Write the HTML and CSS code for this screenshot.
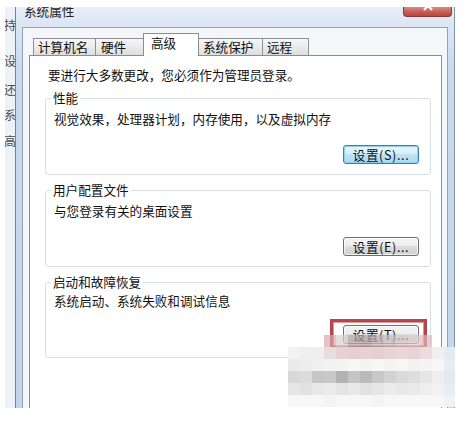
FILE: index.html
```html
<!DOCTYPE html>
<html lang="zh-CN">
<head>
<meta charset="utf-8">
<title>系统属性</title>
<link rel="stylesheet" href="styles.css">
</head>
<body>
<div class="scene">
  <div class="bgwin">
    <span class="bgchar c1">持</span>
    <span class="bgchar c2">设</span>
    <span class="bgchar c3">还</span>
    <span class="bgchar c4">系</span>
    <span class="bgchar c5">高</span>
  </div>
  <div class="dialog">
    <div class="titlebar">
      <span class="title">系统属性</span>
      <span class="close"><svg width="47" height="9" viewBox="0 0 47 9"><path d="M20 -6 L28 3 M28 -6 L20 3" stroke="#ffffff" stroke-width="2.2" fill="none"/></svg></span>
    </div>
    <div class="content">
      <div class="tabs">
        <div class="tab t1">计算机名</div>
        <div class="tab t2">硬件</div>
        <div class="tab sel t3">高级</div>
        <div class="tab t4">系统保护</div>
        <div class="tab t5">远程</div>
      </div>
      <div class="panel">
        <p class="intro">要进行大多数更改，您必须作为管理员登录。</p>
        <div class="group g1">
          <span class="legend">性能</span>
          <p class="desc">视觉效果，处理器计划，内存使用，以及虚拟内存</p>
          <div class="btnrow"><button class="btn default">设置(S)...</button></div>
        </div>
        <div class="group g2">
          <span class="legend">用户配置文件</span>
          <p class="desc">与您登录有关的桌面设置</p>
          <div class="btnrow"><button class="btn">设置(E)...</button></div>
        </div>
        <div class="group g3">
          <span class="legend">启动和故障恢复</span>
          <p class="desc">系统启动、系统失败和调试信息</p>
          <div class="btnrow"><button class="btn">设置(T)...</button><span class="hl"></span></div>
        </div>
      </div>
    </div>
  </div>
  <svg class="mosaic" width="168" height="72" viewBox="0 0 168 72" shape-rendering="crispEdges">
    <g fill-opacity="0.7">
      <rect x="36" y="0" width="12" height="12" fill="#d7a9b0"/>
      <rect x="48" y="0" width="12" height="12" fill="#dcd0d0"/>
      <rect x="60" y="0" width="12" height="12" fill="#b8a8ac"/>
      <rect x="72" y="0" width="12" height="12" fill="#b4a4a8"/>
      <rect x="84" y="0" width="12" height="12" fill="#c4b4b8"/>
      <rect x="96" y="0" width="12" height="12" fill="#ccbec1"/>
      <rect x="108" y="0" width="12" height="12" fill="#d6c8ca"/>
      <rect x="120" y="0" width="12" height="12" fill="#dccdcf"/>
      <rect x="132" y="0" width="12" height="12" fill="#dcb8bc"/>
    </g>
    <rect x="0" y="12" width="12" height="12" fill="#f2f2f2"/>
    <rect x="12" y="12" width="12" height="12" fill="#efefef"/>
    <rect x="24" y="12" width="12" height="12" fill="#eeeeee"/>
    <rect x="36" y="12" width="12" height="12" fill="#e8dcdd"/>
    <rect x="48" y="12" width="12" height="12" fill="#e6d2d5"/>
    <rect x="60" y="12" width="12" height="12" fill="#e4d0d3"/>
    <rect x="72" y="12" width="12" height="12" fill="#e6d2d5"/>
    <rect x="84" y="12" width="12" height="12" fill="#e4d0d3"/>
    <rect x="96" y="12" width="12" height="12" fill="#e6d4d6"/>
    <rect x="108" y="12" width="12" height="12" fill="#e8d6d8"/>
    <rect x="120" y="12" width="12" height="12" fill="#e6d4d6"/>
    <rect x="132" y="12" width="12" height="12" fill="#ecdcde"/>
    <rect x="144" y="12" width="12" height="12" fill="#f2eeee"/>
    <rect x="156" y="12" width="12" height="12" fill="#e2eaf2"/>
    <rect x="0" y="24" width="12" height="12" fill="#eaeaea"/>
    <rect x="12" y="24" width="12" height="12" fill="#ededed"/>
    <rect x="24" y="24" width="12" height="12" fill="#f0f0f0"/>
    <rect x="36" y="24" width="12" height="12" fill="#f2f2f2"/>
    <rect x="48" y="24" width="12" height="12" fill="#f4f4f4"/>
    <rect x="60" y="24" width="12" height="12" fill="#f6f6f6"/>
    <rect x="72" y="24" width="12" height="12" fill="#f4f4f4"/>
    <rect x="84" y="24" width="12" height="12" fill="#f6f6f6"/>
    <rect x="96" y="24" width="12" height="12" fill="#f4f4f4"/>
    <rect x="108" y="24" width="12" height="12" fill="#f6f6f6"/>
    <rect x="120" y="24" width="12" height="12" fill="#f2f2f2"/>
    <rect x="132" y="24" width="12" height="12" fill="#f4f4f4"/>
    <rect x="144" y="24" width="12" height="12" fill="#f6f6f6"/>
    <rect x="156" y="24" width="12" height="12" fill="#e6edf4"/>
    <rect x="0" y="36" width="12" height="12" fill="#d8d8d8"/>
    <rect x="12" y="36" width="12" height="12" fill="#dcdcdc"/>
    <rect x="24" y="36" width="12" height="12" fill="#c6c6c6"/>
    <rect x="36" y="36" width="12" height="12" fill="#c8c8c8"/>
    <rect x="48" y="36" width="12" height="12" fill="#b2b2b2"/>
    <rect x="60" y="36" width="12" height="12" fill="#c4c4c4"/>
    <rect x="72" y="36" width="12" height="12" fill="#bababa"/>
    <rect x="84" y="36" width="12" height="12" fill="#c8c8c8"/>
    <rect x="96" y="36" width="12" height="12" fill="#d2d2d2"/>
    <rect x="108" y="36" width="12" height="12" fill="#dadada"/>
    <rect x="120" y="36" width="12" height="12" fill="#dedede"/>
    <rect x="132" y="36" width="12" height="12" fill="#e6e6e6"/>
    <rect x="144" y="36" width="12" height="12" fill="#eeeeee"/>
    <rect x="156" y="36" width="12" height="12" fill="#e2e9f1"/>
    <rect x="0" y="48" width="12" height="12" fill="#e6e6e6"/>
    <rect x="12" y="48" width="12" height="12" fill="#e2e2e2"/>
    <rect x="24" y="48" width="12" height="12" fill="#e8e8e8"/>
    <rect x="36" y="48" width="12" height="12" fill="#ebebeb"/>
    <rect x="48" y="48" width="12" height="12" fill="#e4e4e4"/>
    <rect x="60" y="48" width="12" height="12" fill="#e8e8e8"/>
    <rect x="72" y="48" width="12" height="12" fill="#e2e2e2"/>
    <rect x="84" y="48" width="12" height="12" fill="#e6e6e6"/>
    <rect x="96" y="48" width="12" height="12" fill="#ececec"/>
    <rect x="108" y="48" width="12" height="12" fill="#e8e8e8"/>
    <rect x="120" y="48" width="12" height="12" fill="#eaeaea"/>
    <rect x="132" y="48" width="12" height="12" fill="#eeeeee"/>
    <rect x="144" y="48" width="12" height="12" fill="#f2f2f2"/>
    <rect x="156" y="48" width="12" height="12" fill="#e6edf4"/>
    <rect x="0" y="60" width="156" height="12" fill="#f7f7f7"/>
    <rect x="36" y="60" width="12" height="12" fill="#f3f3f3"/>
    <rect x="84" y="60" width="12" height="12" fill="#f4f4f4"/>
    <rect x="156" y="60" width="12" height="12" fill="#eef2f6"/>
  </svg>
</div>
</body>
</html>
```
FILE: styles.css
```css
* { box-sizing: border-box; }

body {
  margin: 0;
  background: #ffffff;
  font-family: "Noto Sans CJK SC", "Microsoft YaHei", sans-serif;
  font-size: 12.6px;
  color: #111111;
}

.scene {
  position: relative;
  display: flex;
  width: 450px;
  height: 401px;
  margin: 7px 0 0 5px;
  overflow: hidden;
}

/* window behind the dialog */
.bgwin {
  flex: none;
  width: 10px;
  display: flex;
  flex-direction: column;
  background: #edf2f8;
  overflow: hidden;
}
.bgchar {
  font-size: 12px;
  line-height: 14px;
  margin-left: -1px;
  color: #4a4a4a;
  white-space: nowrap;
}
.c1 { margin-top: 11px; }
.c2 { margin-top: 22px; }
.c3 { margin-top: 15px; }
.c4 { margin-top: 11px; }
.c5 { margin-top: 12px; }

/* dialog frame */
.dialog {
  flex: none;
  width: 440px;
  display: flex;
  flex-direction: column;
  padding: 0 6px;
  border-left: 1px solid #6c83a0;
  border-right: 1px solid #7d93ab;
  background: linear-gradient(#e6eef8 0px, #dbe6f3 20px, #c9daed 60px, #c3d5ea 100%);
}

.titlebar {
  flex: none;
  height: 20px;
  display: flex;
  justify-content: space-between;
  align-items: flex-start;
}
.title {
  margin: -3px 0 0 2px;
  font-size: 12.6px;
  line-height: 14px;
  color: #222222;
}
.close {
  width: 49px;
  height: 10px;
  margin-right: -4px;
  border: 1px solid #8a3a36;
  border-top: none;
  border-radius: 0 0 4px 4px;
  background: linear-gradient(#d98c84, #c85d52 55%, #b9463c);
  display: flex;
}
.close svg { display: block; }

.content {
  flex: 1;
  display: flex;
  flex-direction: column;
  padding: 5px 5px 0 6px;
  border: 1px solid #8ea3b8;
  border-bottom: none;
  background: #f4f6f9;
}

/* tabs */
.tabs {
  flex: none;
  height: 22px;
  display: flex;
  align-items: flex-end;
  padding-left: 4px;
}
.tab {
  height: 17px;
  line-height: 16px;
  border: 1px solid #8d9096;
  border-bottom: none;
  background: linear-gradient(#f7f7f7, #ebebeb 50%, #dedede);
  white-space: nowrap;
  color: #111111;
  position: relative;
  z-index: 1;
}
.tab + .tab { margin-left: -1px; }
.t1 { width: 63px; padding-left: 4px; }
.t2 { width: 49px; padding-left: 5px; }
.t3 { width: 56px; padding-left: 7px; }
.t4 { width: 65px; padding-left: 4px; }
.t5 { width: 47px; padding-left: 4px; }
.tab.sel {
  height: 23px;
  line-height: 18px;
  margin-bottom: -1px;
  background: #ffffff;
  border-color: #898c95;
  z-index: 3;
}

/* tab page */
.panel {
  flex: 1;
  display: flex;
  flex-direction: column;
  padding: 11px 10px 0 15px;
  border: 1px solid #898c95;
  border-bottom: none;
  background: #ffffff;
  position: relative;
  z-index: 2;
}
.intro {
  margin: 0 0 0 3px;
  line-height: 15px;
}

.group {
  display: flex;
  flex-direction: column;
  padding: 0 11px 10px 8px;
  border: 1px solid #d5dfe5;
  border-radius: 3px;
}
.g1 { margin-top: 16px; }
.g2 { margin-top: 15px; }
.g3 { margin-top: 15px; padding-bottom: 13px; }

.legend {
  align-self: flex-start;
  margin: -8px 0 0 -3px;
  padding: 0 2px;
  line-height: 14px;
  background: #ffffff;
}
.desc {
  margin: 6px 0 0 0;
  line-height: 15px;
}
.g3 .desc { margin-top: 4px; }

.btnrow {
  position: relative;
  display: flex;
  justify-content: flex-end;
  margin-top: 19px;
}
.g3 .btnrow { margin-top: 17px; }

.btn {
  width: 76px;
  height: 19px;
  padding: 0;
  font-family: inherit;
  font-size: 12.6px;
  line-height: 17px;
  letter-spacing: 0.6px;
  color: #111111;
  border: 1px solid #707070;
  border-radius: 3px;
  background: linear-gradient(#f4f4f4 0%, #ececec 50%, #dddddd 50%, #d0d0d0 100%);
  box-shadow: inset 0 0 0 1px rgba(255, 255, 255, 0.7);
}
.btn.default {
  border-color: #3c7fb1;
  background: linear-gradient(#e8f5fc 0%, #d6eefb 50%, #bfe3f7 50%, #a9d8f2 100%);
  box-shadow: inset 0 0 0 1px #8fd0ec;
}

/* red annotation frame */
.hl {
  position: absolute;
  right: -8px;
  top: -6px;
  width: 97px;
  height: 30px;
  border: 3px solid #b5474c;
  box-shadow: inset 0 0 0 1px #d99a9e;
  pointer-events: none;
}

/* blurred watermark */
.mosaic {
  position: absolute;
  left: 283px;
  top: 328px;
  z-index: 5;
}
```
